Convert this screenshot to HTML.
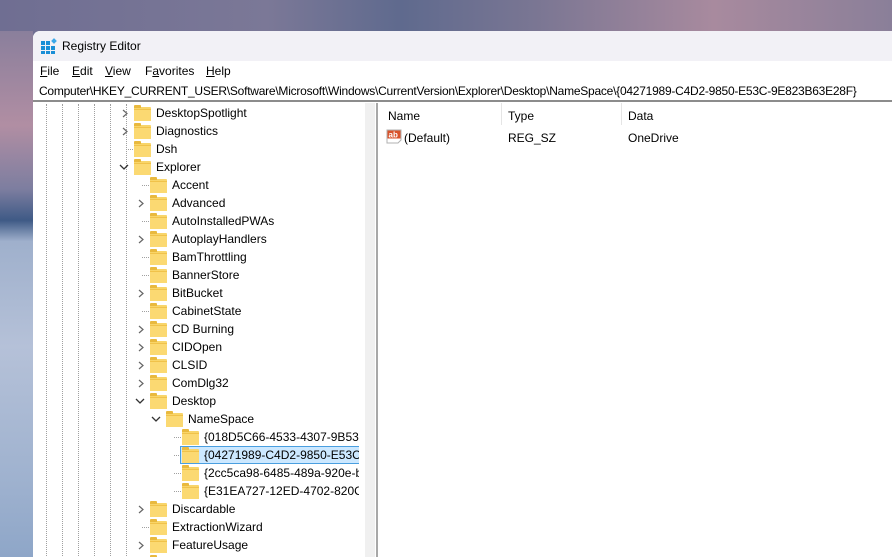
<!DOCTYPE html>
<html><head><meta charset="utf-8"><style>
*{margin:0;padding:0;box-sizing:border-box}
html,body{width:892px;height:557px;overflow:hidden}
body{position:relative;font-family:"Liberation Sans",sans-serif;font-size:12px;color:#000;
background:linear-gradient(90deg,#6f6e92 0%,#7b7897 30%,#5f6a8e 45%,#7a7693 60%,#a88a9e 80%,#8a7f99 100%)}
.left{position:absolute;left:0;top:31px;width:33px;height:526px;background:linear-gradient(180deg,#8a7f9c 0%,#b18ea3 18%,#7d7ea0 30%,#3f5a86 36%,#9fb0cc 40%,#b5c1d8 60%,#9fb2cf 85%,#8ea6c8 100%)}
.win{position:absolute;left:33px;top:31px;width:870px;height:526px;background:#fff;border-top-left-radius:7px;overflow:hidden}
.title{position:absolute;left:0;top:0;width:100%;height:30px;background:#f2f1f6}
.title span{position:absolute;left:29px;top:8px;font-size:12px}
.menu{position:absolute;top:33px;left:7px}
.menu span{position:absolute;top:0;white-space:nowrap}
.addr{position:absolute;left:0;top:50px;width:100%;height:21px;border-bottom:2px solid #8c8c8c;padding:3px 0 0 6px;white-space:nowrap;letter-spacing:-0.24px}
.tree{position:absolute;left:0;top:73px;width:326px;height:480px;overflow:hidden}
.vl{position:absolute;top:0;height:480px;border-left:1px dotted #a0a0a0}
.row{position:absolute;height:18px;left:0;width:400px}
.row .t{position:absolute;top:2px;white-space:nowrap}
.fd{position:absolute;top:3px;width:17px;height:13px;background:#f8d56a;border-radius:1px}
.fd:before{content:"";position:absolute;left:0;top:-2px;width:7px;height:3px;background:#e9b93e;border-radius:1px 1px 0 0}
.fd:after{content:"";position:absolute;left:0;top:2px;width:17px;height:11px;background:#fbd972;border-top:1px solid #f0c24a}
.gr{position:absolute;left:332px;top:72px;width:10px;height:480px;background:#f0f0f0}
.div{position:absolute;left:343px;top:72px;width:2px;height:480px;background:#a8a8a8}
.hd{position:absolute;top:78px;color:#000}
.hs{position:absolute;top:72px;width:1px;height:22px;background:#e5e5e5}
</style></head><body>
<div class="left"></div>
<div class="win">
<div class="title">
<svg style="position:absolute;left:8px;top:7px" width="16" height="16" viewBox="0 0 16 16"><g fill="#1a8fd6"><rect x="0" y="3" width="4" height="4"/><rect x="5" y="3" width="4" height="4"/><rect x="0" y="8" width="4" height="4"/><rect x="5" y="8" width="4" height="4"/><rect x="10" y="8" width="4" height="4"/><rect x="0" y="13" width="4" height="3"/><rect x="5" y="13" width="4" height="3"/><rect x="10" y="13" width="4" height="3"/></g><rect x="11" y="1" width="4" height="4" fill="#3aa7e8" transform="rotate(45 13 3)"/></svg>
<span>Registry Editor</span></div>
<div class="menu"><span style="left:0"><u>F</u>ile</span><span style="left:32px"><u>E</u>dit</span><span style="left:65px"><u>V</u>iew</span><span style="left:105px">F<u>a</u>vorites</span><span style="left:166px"><u>H</u>elp</span></div>
<div class="addr">Computer\HKEY_CURRENT_USER\Software\Microsoft\Windows\CurrentVersion\Explorer\Desktop\NameSpace\{04271989-C4D2-9850-E53C-9E823B63E28F}</div>
<div class="tree" id="tree">
<div class="vl" style="left:13px"></div><div class="vl" style="left:29px"></div><div class="vl" style="left:45px"></div><div class="vl" style="left:61px"></div><div class="vl" style="left:77px"></div><div class="vl" style="left:93px"></div>
</div>
<div class="gr"></div><div class="div"></div>
<div class="hd" style="left:355px">Name</div><div class="hs" style="left:468px"></div>
<div class="hd" style="left:475px">Type</div><div class="hs" style="left:588px"></div>
<div class="hd" style="left:595px">Data</div>
<svg style="position:absolute;left:353px;top:98px" width="16" height="15" viewBox="0 0 16 15"><path d="M1 1h14v10l-3 3H1z" fill="#fff" stroke="#b0b0b0"/><rect x="1.5" y="1.5" width="13" height="8" fill="#d9532b"/><text x="2.5" y="8.5" font-size="8" font-weight="bold" fill="#fff" font-family="Liberation Sans">ab</text></svg>
<div style="position:absolute;left:371px;top:100px">(Default)</div>
<div style="position:absolute;left:475px;top:100px">REG_SZ</div>
<div style="position:absolute;left:595px;top:100px">OneDrive</div>
</div>
<script>
var rows=[["DesktopSpotlight",0,">"],["Diagnostics",0,">"],["Dsh",0,""],["Explorer",0,"v"],["Accent",1,""],["Advanced",1,">"],["AutoInstalledPWAs",1,""],["AutoplayHandlers",1,">"],["BamThrottling",1,""],["BannerStore",1,""],["BitBucket",1,">"],["CabinetState",1,""],["CD Burning",1,">"],["CIDOpen",1,">"],["CLSID",1,">"],["ComDlg32",1,">"],["Desktop",1,"v"],["NameSpace",2,"v"],["{018D5C66-4533-4307-9B53-224DE2ED1FE6}",3,""],["{04271989-C4D2-9850-E53C-9E823B63E28F}",3,"s"],["{2cc5ca98-6485-489a-920e-b3e88a6ccce3}",3,""],["{E31EA727-12ED-4702-820C-4B6445F28E1A}",3,""],["Discardable",1,">"],["ExtractionWizard",1,""],["FeatureUsage",1,">"],["FileExts",1,">"]];
var t=document.getElementById('tree'),h='';
rows.forEach(function(r,i){var y=i*18,fx=101+16*r[1],cx=fx-12;
h+='<div class="row" style="top:'+y+'px">';
if(r[2]==">")h+='<svg style="position:absolute;left:'+(cx-1)+'px;top:5px" width="8" height="9"><path d="M2 1l4 3.5L2 8" fill="none" stroke="#666" stroke-width="1.2"/></svg>';
else if(r[2]=="v")h+='<svg style="position:absolute;left:'+(cx-3)+'px;top:6px" width="10" height="7"><path d="M1 1l4 4 4-4" fill="none" stroke="#333" stroke-width="1.3"/></svg>';
else h+='<div style="position:absolute;left:'+(fx-8)+'px;top:9px;width:7px;border-top:1px dotted #a0a0a0"></div>';
if(r[2]=="s")h+='<div style="position:absolute;left:'+(fx-2)+'px;top:0;width:200px;height:18px;background:#cce8ff;border:1px solid #4a9fe0"></div>';
h+='<div class="fd" style="left:'+fx+'px"></div><div class="t" style="left:'+(fx+22)+'px">'+r[0]+'</div></div>';});
t.innerHTML+=h;
</script>
</body></html>
